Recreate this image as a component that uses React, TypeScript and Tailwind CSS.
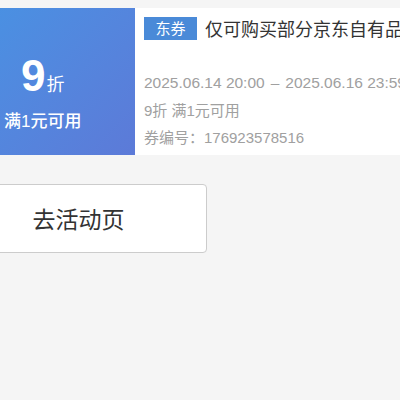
const num = { fontFamily: '"Liberation Sans", "Noto Sans CJK SC", sans-serif' }

export default function App() {
  return (
    <div
      className="h-[400px] w-[400px] overflow-hidden bg-[#f5f5f5] pt-2"
      style={{ fontFamily: '"Noto Sans CJK SC", "Noto Sans", sans-serif' }}
    >
      <div className="flex h-[147px] w-[560px] bg-white">
        <div className="flex w-[135px] shrink-0 flex-col bg-gradient-to-br from-[#4a90e2] to-[#5c7ad8] pt-[46px] text-white">
          <div className="flex items-baseline pl-[21px]">
            <span className="text-[44px] font-bold leading-none" style={num}>9</span>
            <span className="ml-[1px] text-[18px] leading-none">折</span>
          </div>
          <div className="mt-[15px] whitespace-nowrap pl-[4px] text-[17px] font-medium leading-none" style={num}>满1元可用</div>
        </div>
        <div className="flex flex-1 flex-col pl-[9px] pt-[7px]">
          <div className="flex items-center gap-[8px]">
            <span className="flex h-[23px] w-[53px] items-center justify-center bg-[#4a8ad8] text-[15px] text-white">东券</span>
            <span className="whitespace-nowrap text-[18px] text-[#333]">仅可购买部分京东自有品牌商品</span>
          </div>
          <div className="mt-[33px] flex whitespace-nowrap text-[15.5px] leading-none text-[#a0a0a0]" style={num}>
            <span>2025.06.14 20:00</span>
            <span className="mx-[6px]">–</span>
            <span>2025.06.16 23:59</span>
          </div>
          <div className="mt-[12px] whitespace-nowrap text-[15px] leading-none text-[#a0a0a0]" style={num}>9折 满1元可用</div>
          <div className="mt-[12px] whitespace-nowrap text-[15px] leading-none text-[#a0a0a0]" style={num}>券编号：176923578516</div>
        </div>
      </div>
      <div className="mt-[29px] ml-[-50px] flex h-[69px] w-[257px] items-center justify-center rounded-[4px] border border-[#ccc] bg-white text-[23px] text-[#333]">
        去活动页
      </div>
    </div>
  )
}
